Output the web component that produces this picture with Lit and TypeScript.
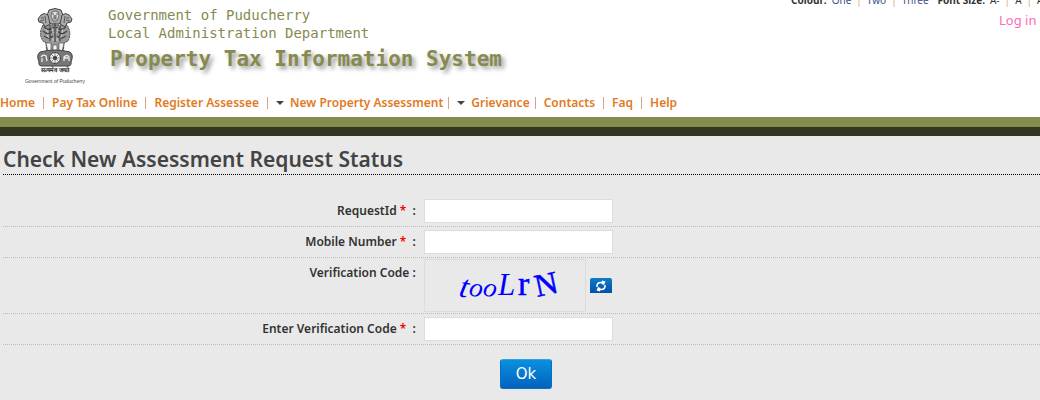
import { LitElement, html, svg, css } from "lit";
import { customElement } from "lit/decorators.js";
import { classMap } from "lit/directives/class-map.js";

@customElement("state-emblem")
export class StateEmblem extends LitElement {
  static styles = css`
    :host { display: block; text-align: center; color: #444; font-family: "Liberation Sans", Arial, sans-serif; }
    .art { display: block; width: 40px; height: 60px; margin: 0 auto; }
    .motto { display: block; font-size: 6px; line-height: 7px; font-weight: bold; color: #222; }
    .state { display: block; font-size: 5px; line-height: 14px; white-space: nowrap; }
  `;
  render() {
    return html`
      <svg class="art" viewBox="0 0 40 60" role="img" aria-label="State emblem" fill="none" stroke="#444" stroke-width="1">
        <path fill="#999" d="M8 18 Q3 27 8 34 L11 36 L12 49 H28 L29 36 L33 34 Q37 26 32 18 Z" stroke-dasharray="2 .7"/>
        <path fill="#f4f4f4" stroke-width=".6" d="M11 36 L14 49 H16 L16 36 Z M18 38 V49 H22 V38 Z M24 36 L24 49 H26 L29 36 Z"/>
        <path fill="#aaa" d="M14 3 Q20 0 26 3 Q29 8 27 13 L24 17 H16 L13 13 Q11 8 14 3 Z"/>
        <path fill="#ddd" stroke-width=".7" d="M17 5 Q20 3 23 5 L24 9 L22 14 H18 L16 9 Z M17 7 H19 M21 7 H23 M19 8 V11 H21 V8 M18 12 H22"/>
        <path fill="#aaa" d="M13 8 Q9 5 6 8 L3 12 L4 15 L8 16 L10 20 L15 17 Z M27 8 Q31 5 34 8 L37 12 L36 15 L32 16 L30 20 L25 17 Z"/>
        <path stroke-width=".8" d="M6 11 H9 M5 14 L9 13 M10 9 L11 16 M34 11 H31 M35 14 L31 13 M30 9 L29 16"/>
        <path stroke-width="1.2" d="M9 20 Q14 25 19 20 M21 20 Q26 25 31 20 M8 24 Q13 29 18 24 M22 24 Q27 29 32 24 M9 29 Q14 33 18 29 M22 29 Q26 33 31 29 M20 16 V35 M15 19 V34 M25 19 V34"/>
        <path stroke="#eee" stroke-width=".7" d="M11 22 L13 26 M17 21 L18 26 M23 21 L22 26 M28 22 L27 26 M12 28 L14 31 M27 28 L25 31 M18 31 V34 M22 31 V34"/>
        <path fill="#777" d="M5 45 Q20 41 35 45 Q39 48 36 55 Q37 58 34 59 H6 Q3 58 4 55 Q1 48 5 45 Z"/>
        <circle cx="20" cy="51" r="5.5" fill="#eee"/>
        <circle cx="20" cy="51" r="1.5" fill="#333"/>
        <path stroke-width=".6" d="M20 46 V56 M15 51 H25 M16.500 47.500 L23.500 54.500 M23.500 47.500 L16.500 54.500"/>
        <path stroke="#eee" stroke-width="1.3" d="M6 50 Q8 47 11 49 L12 54 M7 51 V55 M29 54 V50 Q32 47 34 50 V54 M29 51 H33"/>
      </svg>
      <span class="motto" lang="hi">सत्यमेव जयते</span>
      <span class="state">Government of Puducherry</span>
    `;
  }
}

const NAV = [
  { label: "Home" },
  { label: "Pay Tax Online" },
  { label: "Register Assessee" },
  { label: "New Property Assessment", menu: true },
  { label: "Grievance", menu: true },
  { label: "Contacts" },
  { label: "Faq" },
  { label: "Help" },
];

@customElement("app-root")
export class AppRoot extends LitElement {
  static styles = css`
    :host { display: block; min-height: 100vh; background: #e9e9e9; color: #333; font-family: "Noto Sans", "Open Sans", sans-serif; font-size: 12px; overflow-x: hidden; }
    * { box-sizing: border-box; }
    a { text-decoration: none; color: inherit; }
    .head { display: grid; grid-template-columns: 108px 1fr auto; height: 92px; background: #fff; overflow: hidden; }
    .emblem { margin: 7px 0 0 2px; }
    .names { font-family: "DejaVu Sans Mono", monospace; color: #878a4f; white-space: nowrap; padding-top: 6px; }
    .org { margin: 0; font-size: 14px; line-height: 18px; }
    .title { margin: 4px 0 0 2px; font-size: 21px; line-height: 26px; font-weight: bold; text-shadow: 3px 3px 4px #999; }
    .side { width: 249px; white-space: nowrap; }
    .prefs { display: flex; gap: 5px; margin-top: -9px; height: 18px; line-height: 18px; font-size: 10px; color: #333; }
    .pick { color: #3b4f8c; }
    .bar { color: #e0a878; }
    .size { margin-left: 4px; }
    .login { display: block; width: max-content; margin-left: 208px; margin-top: 2px; font-size: 13px; line-height: 18px; color: #ff69b4; }
    .nav { display: flex; align-items: center; height: 25px; padding-bottom: 4px; background: #fff; color: #e17a1d; font-weight: 600; font-size: 12px; line-height: 20px; white-space: nowrap; }
    .link { margin-right: 8px; }
    .menu { margin-right: 5px; }
    .sep { width: 1px; height: 12px; margin-right: 8px; background: #dba08c; }
    .caret { margin-right: 6px; border: solid transparent; border-width: 4px 4px 0; border-top-color: #444; }
    .band { height: 19px; background: #868b50; border-bottom: 9px solid #333520; }
    .page { padding: 9px 0 0 3px; }
    .heading { margin: 0; padding-bottom: 1px; border-bottom: 1px dotted #000; font-size: 21px; line-height: 28px; font-weight: 600; color: #444; }
    .form { padding-top: 21px; }
    .row { display: grid; grid-template-columns: 40% 1fr; border-bottom: 1px dotted #bbb; }
    .label { text-align: right; padding: 6px 2px 0 0; line-height: 18px; font-weight: 600; }
    .star { color: #f00; margin-right: 3px; }
    .cell { display: flex; align-items: center; gap: 4px; padding: 3px 0 3px 6px; }
    .field { width: 189px; height: 24px; border: 1px solid #ddd; background: #fff; padding: 0 4px; font: inherit; }
    .captcha { display: block; width: 162px; height: 53px; border: 1px solid #dcdcdc; }
    .tall { padding-top: 1px; padding-bottom: 1px; }
    .word { fill: #00f; font-family: "Liberation Serif", serif; }
    .refresh { display: grid; place-items: center; width: 22px; height: 15px; padding: 0; border: 0; border-radius: 2px 2px 0 0; background: linear-gradient(#0c7cc8, #0450a8); }
    .actions { display: flex; justify-content: center; padding-top: 14px; margin-left: 9px; }
    .ok { width: 52px; height: 30px; border: 1px solid #0a6fc0; border-top-color: #3a9fe0; border-radius: 3px; background: linear-gradient(#0a90e0, #0262bc); color: #fff; font: 15px/20px "DejaVu Sans", sans-serif; padding: 0; }
  `;

  private field(id: string, label: string) {
    return html`
      <div class="row">
        <label class="label" for=${id}>${label} <span class="star">*</span> :</label>
        <div class="cell"><input class="field" id=${id} type="text" /></div>
      </div>`;
  }

  render() {
    return html`
      <header class="head">
        <state-emblem class="emblem"></state-emblem>
        <div class="names">
          <p class="org">Government of Puducherry</p>
          <p class="org">Local Administration Department</p>
          <p class="title">Property Tax Information System</p>
        </div>
        <div class="side">
          <div class="prefs">
            <b>Colour:</b><a class="pick" href="#">One</a><span class="bar">|</span><a class="pick" href="#">Two</a><span class="bar">|</span><a class="pick" href="#">Three</a>
            <b class="size">Font Size:</b><a href="#">A-</a><span class="bar">|</span><a href="#">A</a><span class="bar">|</span><a href="#">A+</a>
          </div>
          <a class="login" href="#">Log in</a>
        </div>
      </header>
      <nav class="nav">
        ${NAV.map((n, i) => html`${i ? html`<span class="sep"></span>` : ""}${n.menu ? html`<span class="caret"></span>` : ""}<a class=${classMap({ link: true, menu: !!n.menu })} href="#">${n.label}</a>`)}
      </nav>
      <div class="band"></div>
      <main class="page">
        <h1 class="heading">Check New Assessment Request Status</h1>
        <form class="form">
          ${this.field("request", "RequestId")}
          ${this.field("mobile", "Mobile Number")}
          <div class="row">
            <div class="label">Verification Code :</div>
            <div class="cell tall">
              <svg class="captcha" viewBox="0 0 160 51" role="img" aria-label="Verification code">
                <g class="word">${svg`
                  <text x="33" y="36" font-size="32" font-style="italic" rotate="12">t</text>
                  <text x="43" y="35" font-size="27" font-style="italic" rotate="12">o</text>
                  <text x="57" y="35" font-size="27" font-style="italic" rotate="12">o</text>
                  <text x="73" y="35" font-size="31" font-style="italic">L</text>
                  <text x="93" y="35" font-size="34" stroke="#00f" stroke-width=".5">r</text>
                  <text x="112" y="37" font-size="32" stroke="#00f" stroke-width=".5" rotate="-12">N</text>`}
                </g>
              </svg>
              <button class="refresh" type="button" aria-label="Refresh code">
                <svg width="12" height="12" viewBox="0 0 12 12" fill="none" stroke="#fff" stroke-width="1.6">
                  <path d="M2 7 Q1.500 2.500 6 2.500 H8 M10 5 Q10.500 9.500 6 9.500 H4" />
                  <path fill="#fff" stroke="none" d="M7 .5 L10.500 1.500 L9 5 L6.500 4 Z M5 11.500 L1.500 10.500 L3 7 L5.500 8 Z" />
                </svg>
              </button>
            </div>
          </div>
          ${this.field("code", "Enter Verification Code")}
          <div class="actions"><button class="ok" type="button">Ok</button></div>
        </form>
      </main>
    `;
  }
}
